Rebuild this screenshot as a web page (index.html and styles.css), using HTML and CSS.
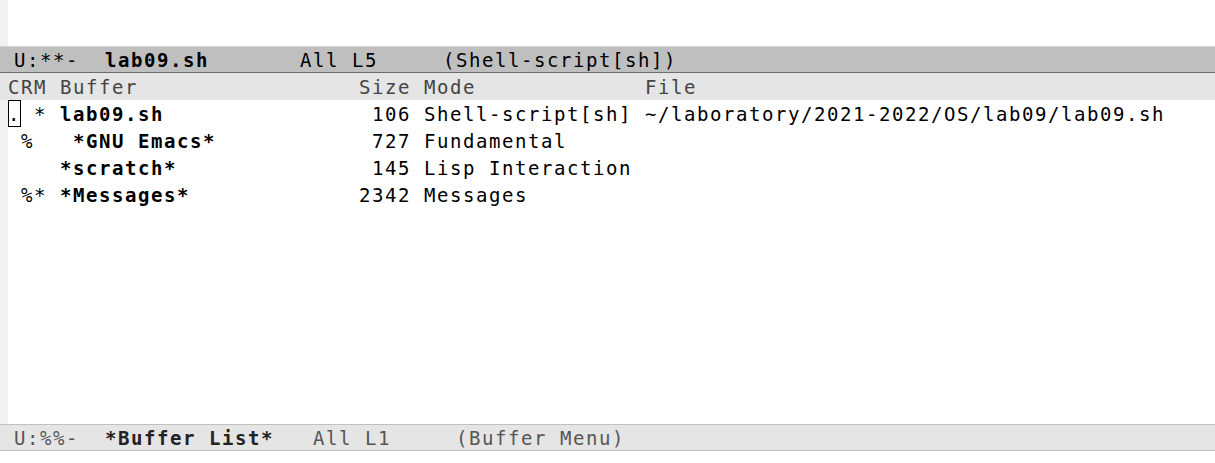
FILE: index.html
```html
<!DOCTYPE html>
<html>
<head>
<meta charset="utf-8">
<link rel="stylesheet" href="styles.css">
</head>
<body>
<div class="frame">
  <div class="window upper"></div>
  <div class="modeline active"><span>U:**-  </span><b>lab09.sh</b><span>       All L5     (Shell-script[sh])</span></div>
  <div class="window lower">
    <div class="header-line">CRM Buffer                 Size Mode             File</div>
    <div class="text">
      <div class="line"><span class="cursor">.</span> * <b>lab09.sh</b>                106 Shell-script[sh] ~/laboratory/2021-2022/OS/lab09/lab09.sh</div>
      <div class="line"> %   <b>*GNU Emacs*</b>            727 Fundamental</div>
      <div class="line">    <b>*scratch*</b>               145 Lisp Interaction</div>
      <div class="line"> %* <b>*Messages*</b>             2342 Messages</div>
    </div>
  </div>
  <div class="modeline inactive"><span>U:%%-  </span><b>*Buffer List*</b><span>   All L1     (Buffer Menu)</span></div>
  <div class="echo"></div>
</div>
</body>
</html>
```

FILE: styles.css
```css
html, body {
  margin: 0;
  padding: 0;
  background: #ffffff;
}

.frame {
  width: 1215px;
  height: 463px;
  display: flex;
  flex-direction: column;
  font-family: "DejaVu Sans Mono", "Liberation Mono", monospace;
  font-size: 19px;
  letter-spacing: 1.56px;
  line-height: 25px;
  color: #000000;
  overflow: hidden;
}

.window {
  border-left: 8px solid #f2f2f2;
  background: #ffffff;
}

.upper {
  height: 46px;
  flex: none;
}

.lower {
  flex: 1;
  display: flex;
  flex-direction: column;
  border-left: none;
}

.modeline {
  flex: none;
  height: 27px;
  box-sizing: border-box;
  padding-left: 14px;
  padding-top: 1px;
  white-space: pre;
  line-height: 24px;
}

.modeline.active {
  background: #bfbfbf;
  border-top: 1px solid #d4d4d4;
  border-bottom: 1px solid #6b6b6b;
  color: #000000;
}

.modeline.inactive {
  background: #e5e5e5;
  border-top: 1px solid #c0c0c0;
  border-bottom: 1px solid #c0c0c0;
  color: #555555;
}

.modeline.inactive b {
  color: #222222;
}

.header-line {
  flex: none;
  height: 27px;
  box-sizing: border-box;
  padding-top: 2px;
  background: #e5e5e5;
  color: #444444;
  padding-left: 8px;
  white-space: pre;
}

.text {
  flex: 1;
  border-left: 8px solid #f2f2f2;
}

.line {
  height: 27px;
  box-sizing: border-box;
  padding-top: 2px;
  white-space: pre;
}

.cursor {
  display: inline-block;
  height: 27px;
  box-sizing: border-box;
  padding-top: 2px;
  margin-top: -2px;
  vertical-align: top;
  box-shadow: inset 0 0 0 1px #000000;
}

.echo {
  flex: none;
  height: 12px;
  background: #ffffff;
}
```
